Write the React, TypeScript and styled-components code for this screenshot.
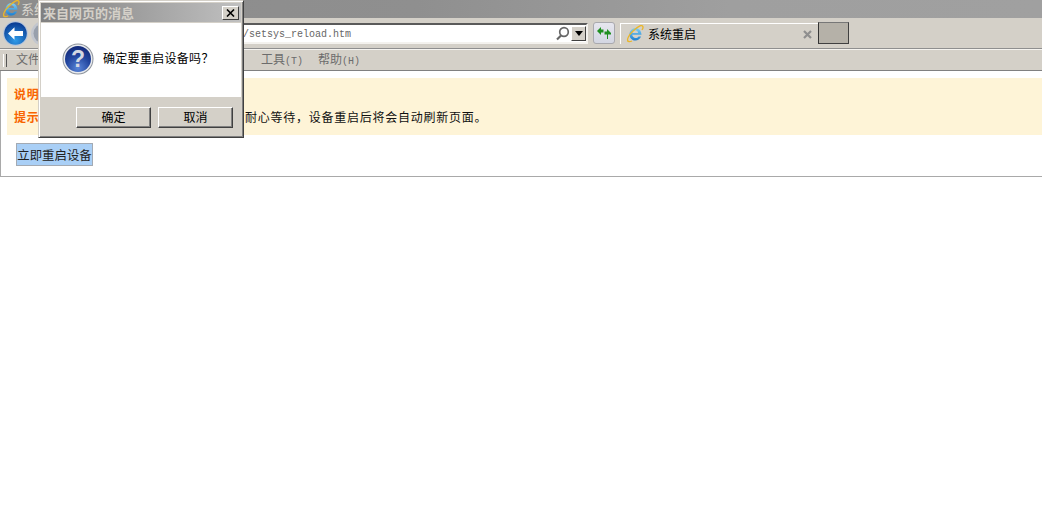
import React from "react";
import styled, { createGlobalStyle } from "styled-components";

const Global = createGlobalStyle`
  html, body { margin: 0; padding: 0; background: #fff; overflow: hidden; }
  body { font-family: "Noto Sans CJK SC", "Liberation Sans", sans-serif; font-size: 12px; }
`;
const Page = styled.div`position: relative; width: 1042px; height: 510px; overflow: hidden; background: #fff;`;
const TitleBar = styled.div`
  height: 18px; background: linear-gradient(90deg, #8c8c8c 0%, #8f8f8f 40%, #9f9f9f 70%, #a0a0a0 100%);
  display: flex; align-items: center; padding-left: 2px; gap: 1px; color: #d8d5ce; font-size: 13px; line-height: 16px;
`;
const NavBar = styled.div`
  height: 31px; box-sizing: border-box; background: #d4d0c8; border-bottom: 1px solid #8f8f8f;
  display: flex; align-items: flex-start; padding: 3px 0 0 3px;
`;
const RoundButton = styled.div<{ $gray?: boolean }>`
  flex: none; width: 25px; height: 25px; margin-right: ${p => (p.$gray ? "1px" : "3px")};
  display: flex; align-items: center; justify-content: center;
`;
const AddressBox = styled.div`
  flex: none; width: 531px; height: 21px; margin: 2px 0 0 0; box-sizing: border-box; background: #fff;
  border: 2px solid; border-color: #5a5a5a #f4f2ee #f4f2ee #5a5a5a; display: flex; align-items: center; position: relative;
`;
const AddressText = styled.span`
  margin-left: 184px; padding-top: 1px; font-family: "Liberation Mono", monospace; font-size: 10px; color: #666; flex: 1;
`;
const SearchGlyph = styled.div`flex: none; width: 15px; height: 15px; margin-right: 1px;`;
const DropButton = styled.div`
  flex: none; width: 15px; height: 15px; background: #d4d0c8; box-sizing: border-box;
  border: 1px solid; border-color: #fff #404040 #404040 #fff; display: flex; align-items: center; justify-content: center;
  &::after { content: ""; border: 4px solid transparent; border-top: 5px solid #000; border-bottom: 0; }
`;
const RefreshButton = styled.div`
  flex: none; width: 22px; height: 22px; margin: 1px 0 0 5px; box-sizing: border-box; border: 1px solid #a9a9ae; border-radius: 3px;
  background: linear-gradient(#e6e6ee, #d3d6e2); display: flex; align-items: center; justify-content: center;
`;
const Tab = styled.div`
  flex: none; width: 198px; height: 21px; margin: 2px 0 0 5px; box-sizing: border-box; border-top: 1px solid #fff; border-left: 1px solid #fff;
  display: flex; align-items: center; padding-left: 5px; gap: 4px; color: #000; line-height: 20px; position: relative;
`;
const TabTitle = styled.span`flex: 1;`;
const TabClose = styled.svg`flex: none; width: 9px; height: 9px; margin-right: 6px;`;
const NewTab = styled.div`
  flex: none; width: 31px; height: 22px; margin-top: 1px; box-sizing: border-box; background: #b5b1a8;
  border: 1px solid; border-color: #777 #404040 #404040 #333;
`;
const Strip = styled.div`height: 1px; background: #f5f3ef;`;
const MenuBar = styled.div`
  height: 21px; box-sizing: border-box; background: #d4d0c8; border-bottom: 1px solid #808080;
  display: flex; align-items: center; color: #6c6c6c; line-height: 19px; padding-left: 3px;
`;
const Grip = styled.div`flex: none; width: 2px; height: 13px; border-right: 1px solid #555; border-left: 1px solid #fff; margin-right: 9px;`;
const MenuItem = styled.span<{ $w: number }>`
  flex: none; width: ${p => p.$w}px; white-space: nowrap;
`;
const MenuKey = styled.span`font-family: "Liberation Mono", monospace; font-size: 10px; color: #6c6c6c; margin-left: 0;`;
const Content = styled.div`
  height: 106px; box-sizing: border-box; border-left: 1px solid #a9a9a9; border-bottom: 1px solid #a9a9a9;
  padding: 7px 0 0 6px;
`;
const Notice = styled.div`
  height: 57px; box-sizing: border-box; background: #fef4d7; padding: 7px 0 0 7px; line-height: 18px; color: #111;
  display: flex; flex-direction: column; gap: 5px; letter-spacing: 0.75px;
`;
const NoticeRow = styled.div`white-space: nowrap;`;
const Strong = styled.strong`color: #f86400; font-weight: 700;`;
const ActionButton = styled.div`
  width: 77px; height: 23px; margin: 8px 0 0 9px; box-sizing: border-box; background: #a9cff6; border: 1px solid #a3aab3;
  display: flex; align-items: center; justify-content: center; color: #222; font-size: 12.4px; white-space: nowrap;
`;
const Dialog = styled.div`
  position: absolute; left: 38px; top: 0; width: 206px; height: 138px; box-sizing: border-box;
  background: #d4d0c8; border: 1px solid; border-color: #d4d0c8 #404040 #404040 #d4d0c8;
  box-shadow: inset 1px 1px 0 #fff, inset -1px -1px 0 #808080; padding: 2px; display: flex; flex-direction: column;
`;
const DialogTitle = styled.div`
  flex: none; height: 19px; background: linear-gradient(90deg, #808080, #c0c0c0); color: #d4d0c8; font-weight: 700;
  font-size: 13px; line-height: 16px; display: flex; align-items: center; justify-content: space-between; padding: 0 2px 0 2px;
`;
const CloseBox = styled.div`
  width: 17px; height: 14px; box-sizing: border-box; background: #d4d0c8; border: 1px solid; border-color: #fff #404040 #404040 #fff;
  display: flex; align-items: center; justify-content: center;
`;
const DialogBody = styled.div`
  flex: none; height: 74px; background: #fff; margin-top: 1px; display: flex; align-items: center; padding-left: 21px; gap: 9px;
  color: #000; box-sizing: border-box; padding-bottom: 2px;
`;
const DialogMessage = styled.span`letter-spacing: 0.3px; padding-bottom: 3px;`;
const DialogFooter = styled.div`flex: 1; display: flex; justify-content: flex-end; gap: 7px; padding: 10px 8px 0 0;`;
const DialogButton = styled.div`
  width: 75px; height: 21px; box-sizing: border-box; background: #d4d0c8; color: #000; border: 1px solid; padding-bottom: 3px;
  border-color: #fff #404040 #404040 #fff; box-shadow: inset -1px -1px 0 #808080; display: flex; align-items: center; justify-content: center;
`;

const IeLogo = ({ size = 18, id }: { size?: number; id: string }) => (
  <svg width={size} height={size} viewBox="0 0 18 18">
    <defs>
      <linearGradient id={id} x1="0" y1="0" x2="0" y2="1"><stop offset="0" stopColor="#7fd0f5" /><stop offset="1" stopColor="#1d7fd0" /></linearGradient>
    </defs>
    <path d="M15.500 9.800H6.200c.2 2 1.600 3.200 3.400 3.200 1.200 0 2.200-.5 2.900-1.600h2.600C13.900 14 11.800 15.500 9.500 15.500 6.100 15.500 3.500 12.800 3.500 9.400S6.100 3 9.500 3C13 3 15.500 6 15.500 9.800zM6.300 8h5.800C11.800 6.300 10.800 5.300 9.300 5.300 7.800 5.300 6.700 6.300 6.300 8z" fill={`url(#${id})`} />
    <path d="M2 16c-1.500-1.500 1-6 4.500-9.500S15-.5 16.500 1c.8.800.5 2.500-.5 4" fill="none" stroke="#eab62a" strokeWidth="1.300" />
    <path d="M1.500 15.500c.5 1.500 2.500 1.500 4.500.5" fill="none" stroke="#eab62a" strokeWidth="1.200" />
  </svg>
);
const BackIcon = () => (
  <svg width="25" height="25" viewBox="0 0 25 25">
    <defs>
      <radialGradient id="bk" cx=".5" cy=".8" r=".75"><stop offset="0" stopColor="#2f9be8" /><stop offset="1" stopColor="#0b3f96" /></radialGradient>
    </defs>
    <circle cx="12.500" cy="12.500" r="12.500" fill="#b8c6da" />
    <circle cx="12.500" cy="12.500" r="11.300" fill="url(#bk)" />
    <path d="M5 12.500L11.500 6.300V10H20V15H11.500V18.700z" fill="#fff" />
  </svg>
);
const ForwardIcon = () => (
  <svg width="25" height="25" viewBox="0 0 25 25"><circle cx="12.500" cy="12.500" r="12.500" fill="#c2c6ce" /><circle cx="12.500" cy="12.500" r="10" fill="#98a0ac" /></svg>
);
const QuestionIcon = () => (
  <svg width="32" height="32" viewBox="0 0 32 32">
    <defs>
      <radialGradient id="qm" cx=".5" cy=".85" r=".8"><stop offset="0" stopColor="#5a86d8" /><stop offset=".6" stopColor="#22459e" /><stop offset="1" stopColor="#142c7c" /></radialGradient>
    </defs>
    <circle cx="16" cy="16" r="15.500" fill="#8e949c" />
    <circle cx="16" cy="16" r="14.500" fill="#e8eaee" />
    <circle cx="16" cy="16" r="13" fill="url(#qm)" />
    <text x="16" y="24" textAnchor="middle" fontFamily="Liberation Sans, sans-serif" fontSize="23" fontWeight="700" fill="#d4d8e2">?</text>
  </svg>
);
const SearchIcon = () => (
  <svg width="15" height="15" viewBox="0 0 15 15"><circle cx="9" cy="6" r="4.300" fill="none" stroke="#666" strokeWidth="1.700" /><path d="M6 9.500L2 13.500" stroke="#666" strokeWidth="2.200" /></svg>
);
const RefreshIcon = () => (
  <svg width="16" height="14" viewBox="0 0 16 14">
    <path d="M1 5L5 1V3.500H7.500V6.500H5V9z" fill="#1f8f20" />
    <path d="M15 7L11 3V5.500H8.500V8.500H11V13H12V8.500H15z" fill="#1f8f20" />
  </svg>
);

export default function App() {
  return (
    <Page>
      <Global />
      <TitleBar><IeLogo id="ieA" /><span>系统重启</span></TitleBar>
      <NavBar>
        <RoundButton><BackIcon /></RoundButton>
        <RoundButton $gray><ForwardIcon /></RoundButton>
        <AddressBox>
          <AddressText>/setsys_reload.htm</AddressText>
          <SearchGlyph><SearchIcon /></SearchGlyph>
          <DropButton />
        </AddressBox>
        <RefreshButton><RefreshIcon /></RefreshButton>
        <Tab>
          <IeLogo id="ieB" />
          <TabTitle>系统重启</TabTitle>
          <TabClose viewBox="0 0 9 9"><path d="M1 1L8 8M8 1L1 8" stroke="#8f8f8f" strokeWidth="2.200" /></TabClose>
        </Tab>
        <NewTab />
      </NavBar>
      <Strip />
      <MenuBar>
        <Grip />
        <MenuItem $w={57}>文件<MenuKey>(F)</MenuKey></MenuItem>
        <MenuItem $w={57}>编辑<MenuKey>(E)</MenuKey></MenuItem>
        <MenuItem $w={57}>查看<MenuKey>(V)</MenuKey></MenuItem>
        <MenuItem $w={74}>收藏夹<MenuKey>(A)</MenuKey></MenuItem>
        <MenuItem $w={57}>工具<MenuKey>(T)</MenuKey></MenuItem>
        <MenuItem $w={57}>帮助<MenuKey>(H)</MenuKey></MenuItem>
      </MenuBar>
      <Content>
        <Notice>
          <NoticeRow><Strong>说明：</Strong></NoticeRow>
          <NoticeRow><Strong>提示：</Strong>重启设备大约需要 3 分钟时间，请耐心等待，设备重启后将会自动刷新页面。</NoticeRow>
        </Notice>
        <ActionButton>立即重启设备</ActionButton>
      </Content>
      <Dialog>
        <DialogTitle>
          <span>来自网页的消息</span>
          <CloseBox>
            <svg width="9" height="8" viewBox="0 0 9 8"><path d="M1 0.500L8 7.500M8 0.500L1 7.500" stroke="#000" strokeWidth="1.600" /></svg>
          </CloseBox>
        </DialogTitle>
        <DialogBody><QuestionIcon /><DialogMessage>确定要重启设备吗？</DialogMessage></DialogBody>
        <DialogFooter>
          <DialogButton>确定</DialogButton>
          <DialogButton>取消</DialogButton>
        </DialogFooter>
      </Dialog>
    </Page>
  );
}
